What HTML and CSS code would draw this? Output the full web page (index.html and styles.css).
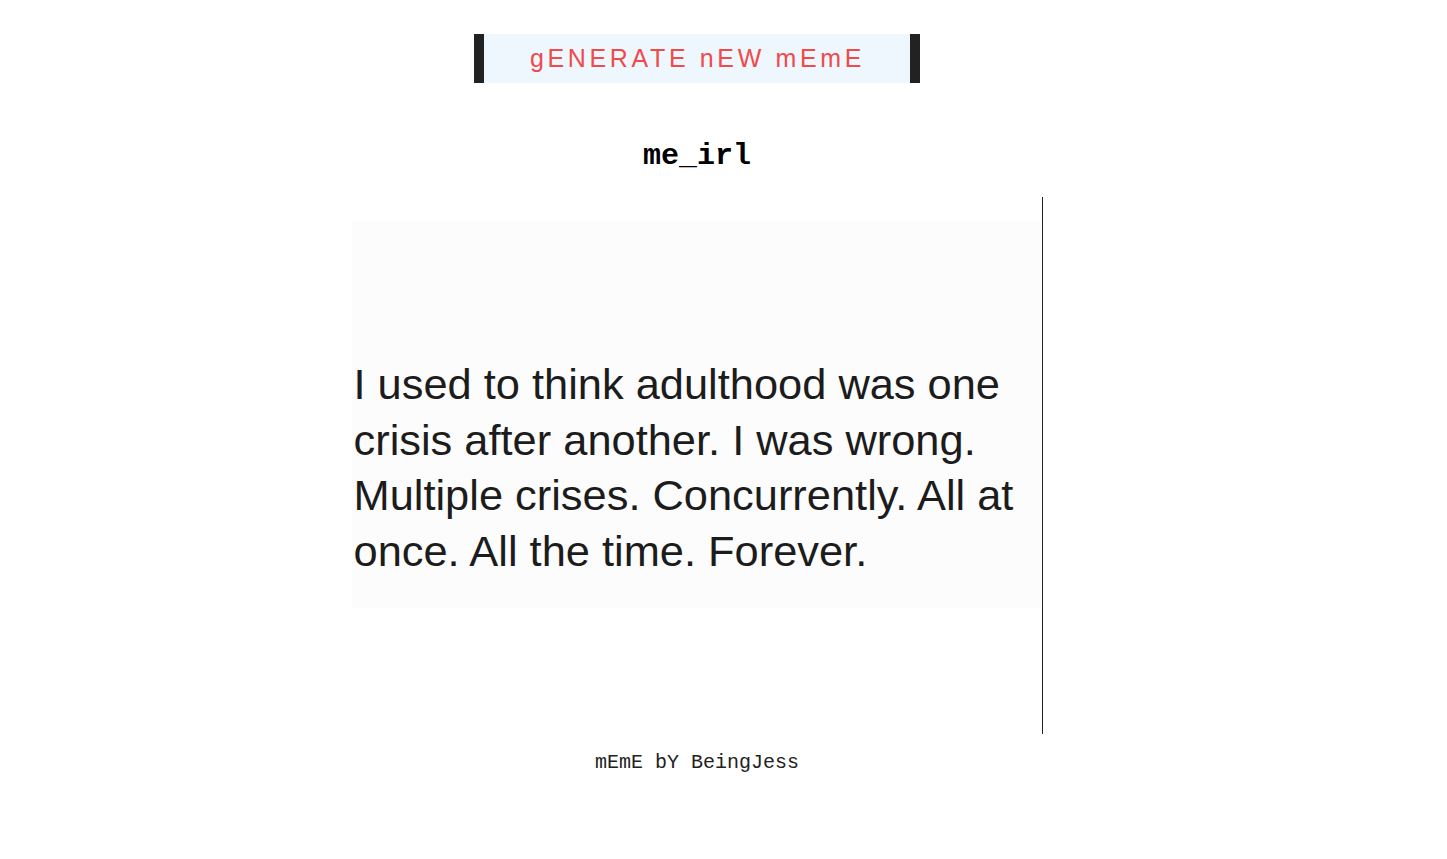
FILE: index.html
```html
<!DOCTYPE html>
<html>
<head>
<meta charset="utf-8">
<link rel="stylesheet" href="styles.css">
</head>
<body>
<main class="page">
  <button class="gen-btn">gENERATE nEW mEmE</button>
  <h1 class="meme-title">me_irl</h1>
  <div class="meme-frame">
    <div class="meme-panel">
      <p class="meme-text">I used to think adulthood was one<br>crisis after another. I was wrong.<br>Multiple crises. Concurrently. All at<br>once. All the time. Forever.</p>
    </div>
  </div>
  <p class="credit">mEmE bY BeingJess</p>
</main>
</body>
</html>
```
FILE: styles.css
```css
html, body {
  margin: 0;
  padding: 0;
  background: #ffffff;
}
body {
  margin: 8px;
}
.page {
  width: 1378px;
  display: flex;
  flex-direction: column;
  align-items: center;
  padding-top: 26px;
}
.gen-btn {
  box-sizing: border-box;
  width: 446px;
  height: 49px;
  margin: 0;
  padding: 0 0 0 1px;
  border: none;
  border-left: 10px solid #222222;
  border-right: 10px solid #222222;
  background: #eef6fe;
  color: #f04a4a;
  font-family: "Liberation Sans", Arial, sans-serif;
  font-size: 25px;
  letter-spacing: 3.65px;
  cursor: pointer;
}
.meme-title {
  margin: 55px 0 0;
  font-family: "Liberation Mono", "Courier New", monospace;
  font-size: 30px;
  font-weight: bold;
  line-height: 36px;
  color: #000;
}
.meme-frame {
  box-sizing: border-box;
  margin-top: 23px;
  width: 691px;
  height: 537px;
  padding-top: 24px;
  border-right: 1px solid #222222;
}
.meme-panel {
  box-sizing: border-box;
  width: 689px;
  height: 387px;
  background: #fcfcfc;
  padding-top: 136px;
}
.meme-text {
  margin: 0;
  padding-left: 2px;
  font-family: "Liberation Sans", Arial, sans-serif;
  font-size: 43.4px;
  line-height: 55.5px;
  color: #1c1c1c;
  letter-spacing: 0;
  white-space: nowrap;
}
.credit {
  margin: 17px 0 0;
  font-family: "Liberation Mono", "Courier New", monospace;
  font-size: 20px;
  line-height: 24px;
  color: #222222;
}
```
